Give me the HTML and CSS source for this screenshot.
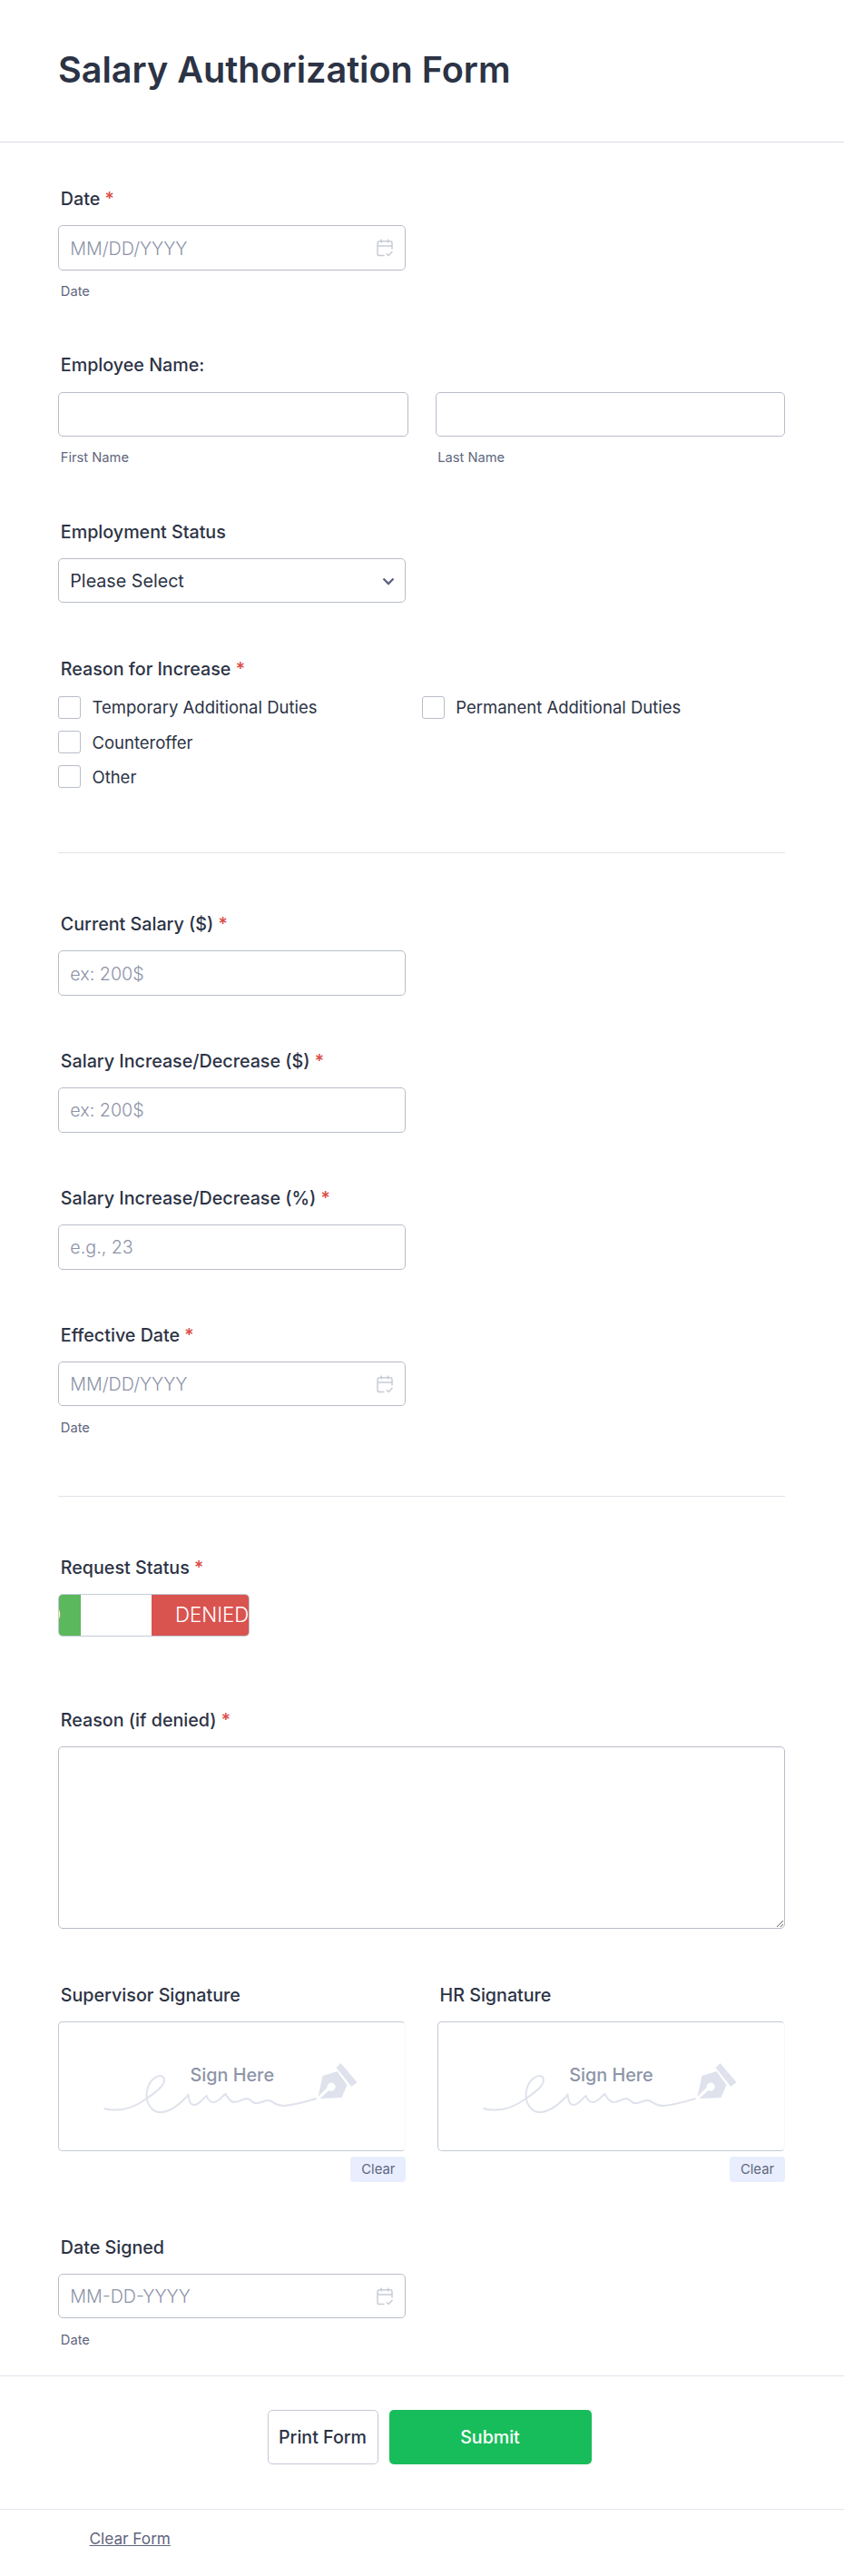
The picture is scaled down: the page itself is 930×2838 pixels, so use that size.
FILE: index.html
```html
<!DOCTYPE html>
<html lang="en">
<head>
  <meta charset="UTF-8">
  <meta name="viewport" content="width=device-width, initial-scale=1">
  <title>Salary Authorization Form</title>
  <link rel="stylesheet" href="styles.css">
</head>
<body>

<!-- shared icons -->
<svg class="defs" width="0" height="0">
  <symbol id="calendar" viewBox="0 0 18 20">
    <path d="M8.5 18.6H3.2a2.2 2.2 0 0 1-2.2-2.2V4.9a2.2 2.2 0 0 1 2.2-2.2h11.6A2.2 2.2 0 0 1 17 4.900v6.6M1 8h16M5.2 .6v4M12.6 .6v4M10.900 16.2l2.3 2.300 4.200-4.600" fill="none" stroke="#c8cbd8" stroke-width="1.5"/>
  </symbol>
  <symbol id="signature" viewBox="0.5 1 381 141">
    <path d="M50 96C66 100 81 97 97 85C112 75 120 67 115 61C109 57 97 66 97 82C98 95 106 101 114 100C124 99 134 91 143 81C144 86 144 92 150 92C156 91 160 84 163 82C165 87 167 89 171 89C178 88 180 82 184 80C186 83 187 87 193 89C198 89 204 85 208 85C213 86 213 91 219 90C224 90 228 86 232 87C238 89 239 93 248 93C260 92 271 89 284 85" fill="none" stroke="#dfe2ec" stroke-width="2"/>
    <path d="M286 83L291 60L307 55L318 70L312 84L288 85L298 76A4.6 4.6 0 1 0 296 73Z" fill="#dfe2ec"/>
    <path d="M306 51L311 46L329 67L323 72Z" fill="#dfe2ec"/>
  </symbol>
</svg>

<form onsubmit="return false;">
  <header class="form-header">
    <h1>Salary Authorization Form</h1>
  </header>

  <div class="form-body">
    <div class="field">
      <label for="date">Date <span class="required">*</span></label>
      <div class="date-box">
        <input type="text" id="date" placeholder="MM/DD/YYYY">
        <svg class="calendar"><use href="#calendar"/></svg>
      </div>
      <span class="sub">Date</span>
    </div>

    <div class="field">
      <label for="first">Employee Name:</label>
      <div class="names">
        <div>
          <input type="text" id="first">
          <span class="sub">First Name</span>
        </div>
        <div>
          <input type="text" id="last">
          <span class="sub">Last Name</span>
        </div>
      </div>
    </div>

    <div class="field">
      <label for="status">Employment Status</label>
      <div class="date-box">
        <select id="status">
          <option>Please Select</option>
        </select>
        <svg class="chevron" viewBox="0 0 14 9"><path d="M1.5 1.5L7 7l5.5-5.5" fill="none" stroke="#5a6080" stroke-width="2.3"/></svg>
      </div>
    </div>

    <div class="field reason">
      <label>Reason for Increase <span class="required">*</span></label>
      <div class="checks">
        <label class="check"><input type="checkbox">Temporary Additional Duties</label>
        <label class="check"><input type="checkbox">Permanent Additional Duties</label>
        <label class="check"><input type="checkbox">Counteroffer</label>
        <label class="check other"><input type="checkbox">Other</label>
      </div>
    </div>

    <hr>

    <div class="field">
      <label for="current">Current Salary ($) <span class="required">*</span></label>
      <input type="text" id="current" placeholder="ex: 200$">
    </div>

    <div class="field">
      <label for="change">Salary Increase/Decrease ($) <span class="required">*</span></label>
      <input type="text" id="change" placeholder="ex: 200$">
    </div>

    <div class="field">
      <label for="percent">Salary Increase/Decrease (%) <span class="required">*</span></label>
      <input type="text" id="percent" placeholder="e.g., 23">
    </div>

    <div class="field effective">
      <label for="effective">Effective Date <span class="required">*</span></label>
      <div class="date-box">
        <input type="text" id="effective" placeholder="MM/DD/YYYY">
        <svg class="calendar"><use href="#calendar"/></svg>
      </div>
      <span class="sub">Date</span>
    </div>

    <hr>

    <div class="field request">
      <label>Request Status <span class="required">*</span></label>
      <div class="toggle">
        <span class="approved">APPROVED</span>
        <span class="handle"></span>
        <span class="denied">DENIED</span>
      </div>
    </div>

    <div class="field">
      <label for="denied">Reason (if denied) <span class="required">*</span></label>
      <textarea id="denied"></textarea>
    </div>

    <div class="signatures">
      <div class="signature">
        <label>Supervisor Signature</label>
        <div class="pad">
          <svg><use href="#signature"/></svg>
          <span>Sign Here</span>
        </div>
        <button type="button" class="clear">Clear</button>
      </div>
      <div class="signature">
        <label>HR Signature</label>
        <div class="pad">
          <svg><use href="#signature"/></svg>
          <span>Sign Here</span>
        </div>
        <button type="button" class="clear">Clear</button>
      </div>
    </div>

    <div class="field signed">
      <label for="signed">Date Signed</label>
      <div class="date-box">
        <input type="text" id="signed" placeholder="MM-DD-YYYY">
        <svg class="calendar"><use href="#calendar"/></svg>
      </div>
      <span class="sub">Date</span>
    </div>
  </div>

  <div class="buttons">
    <button type="button" class="print">Print Form</button>
    <button type="submit" class="submit">Submit</button>
  </div>

  <footer>
    <a href="#" class="clear-form">Clear Form</a>
  </footer>
</form>

</body>
</html>
```
FILE: styles.css
```css
* {
  box-sizing: border-box;
}

body {
  margin: 0;
  font-family: Inter, sans-serif;
  color: #2c3345;
  background: #fff;
}

.defs {
  position: absolute;
}

.form-header {
  height: 157px;
  padding: 53px 64px 0;
  border-bottom: 1px solid #d7dce5;
}

h1 {
  margin: 0;
  font-size: 39.6px;
  line-height: 48px;
  font-weight: 600;
}

.form-body {
  height: 2460px;
  padding: 50.3px 65px 0 64.3px;
}

.field {
  margin-bottom: 60.2px;
}

label {
  display: block;
  padding-left: 2.5px;
  margin-bottom: 17.2px;
  font-size: 19.7px;
  line-height: 24px;
  font-weight: 470;
}

.required {
  color: #dc4a45;
}

input[type=text], select {
  display: block;
  width: 383px;
  height: 49.5px;
  padding: 1px 12px 0;
  border: 1px solid #b8bdc9;
  border-radius: 5px;
  background: #fff;
  color: #2c3345;
  font-family: inherit;
  font-size: 19.7px;
}

input::placeholder {
  color: #8d93a8;
  font-weight: 300;
  opacity: 1;
}

select {
  appearance: none;
}

.date-box {
  position: relative;
  width: 383px;
}

.calendar {
  position: absolute;
  right: 14px;
  top: 15px;
  width: 18px;
  height: 20px;
}

.chevron {
  position: absolute;
  right: 12px;
  top: 21px;
  width: 14px;
  height: 9px;
}

.sub {
  display: block;
  padding-left: 2.5px;
  margin-top: 14.3px;
  font-size: 14.7px;
  line-height: 18px;
  color: #5f667d;
}

.names {
  display: grid;
  grid-template-columns: 1fr 1fr;
  gap: 30px;
}

.names input[type=text] {
  width: 100%;
}

.reason {
  margin-bottom: 70.7px;
}

.checks {
  display: grid;
  grid-template-columns: 400.7px 1fr;
  row-gap: 13.6px;
  padding-top: 1.2px;
}

.check {
  display: flex;
  align-items: center;
  gap: 12.5px;
  margin: 0;
  padding: 0;
  font-size: 18.5px;
  font-weight: 400;
}

.check.other {
  grid-column: 1;
}

.check input {
  appearance: none;
  flex: none;
  width: 24.7px;
  height: 24.7px;
  margin: 0;
  border: 1px solid #b8bdc9;
  border-radius: 3px;
}

hr {
  height: 1px;
  margin: 0 0 66.3px;
  border: none;
  background: #e2e4ea;
}

.effective {
  margin-bottom: 66px;
}

.toggle {
  display: flex;
  width: 211px;
  height: 47px;
  border: 1px solid #c3cad8;
  border-radius: 5px;
  overflow: hidden;
  color: #fff;
  font-size: 22.3px;
  font-weight: 300;
  line-height: 44px;
}

/* the switch has slid over this label, only its end shows */
.approved {
  display: flex;
  justify-content: flex-end;
  width: 24px;
  padding-right: 22px;
  background: #5cb85c;
  overflow: hidden;
}

.handle {
  width: 79.5px;
  background: #fff;
}

.denied {
  flex: 1;
  padding-left: 26px;
  background: #d9534f;
}

.request {
  margin-bottom: 80px;
}

textarea {
  display: block;
  width: 100%;
  height: 201px;
  border: 1px solid #b8bdc9;
  border-radius: 5px;
}

.signatures {
  display: grid;
  grid-template-columns: 383px 383px;
  justify-content: space-between;
  margin-bottom: 60px;
}

.pad {
  position: relative;
  height: 143px;
  border: 1px solid #c3c9d5;
  border-right-color: #f8f8fa;
  border-radius: 5px;
}

.pad svg {
  display: block;
  width: 100%;
  height: 100%;
}

.pad span {
  position: absolute;
  top: 46px;
  left: 0;
  width: 100%;
  text-align: center;
  font-size: 19.8px;
  line-height: 24px;
  font-weight: 470;
  color: #8d95a8;
}

.clear {
  display: block;
  width: 61px;
  height: 28px;
  margin: 6px 0 0 auto;
  padding: 0;
  border: none;
  border-radius: 4px;
  background: #e8eefe;
  color: #5f667d;
  font-family: inherit;
  font-size: 14.8px;
}

.signed {
  margin-bottom: 0;
}

.buttons {
  display: flex;
  justify-content: center;
  gap: 12px;
  height: 147px;
  padding: 37px 0 0 16px;
  border-top: 1px solid #e3e5ec;
}

.buttons button {
  height: 60px;
  padding: 0;
  border-radius: 5px;
  font-family: inherit;
  font-size: 19.6px;
  font-weight: 470;
}

.print {
  width: 122px;
  border: 1px solid #c5c9d6;
  background: #fff;
  color: #2c3345;
}

.submit {
  width: 223px;
  border: none;
  background: #18bd5b;
  color: #fff;
}

footer {
  height: 74px;
  padding: 20px 98.5px 0;
  border-top: 1px solid #e3e5ec;
}

.clear-form {
  display: block;
  width: max-content;
  font-size: 17.2px;
  line-height: 24px;
  color: #5f667d;
}
```
